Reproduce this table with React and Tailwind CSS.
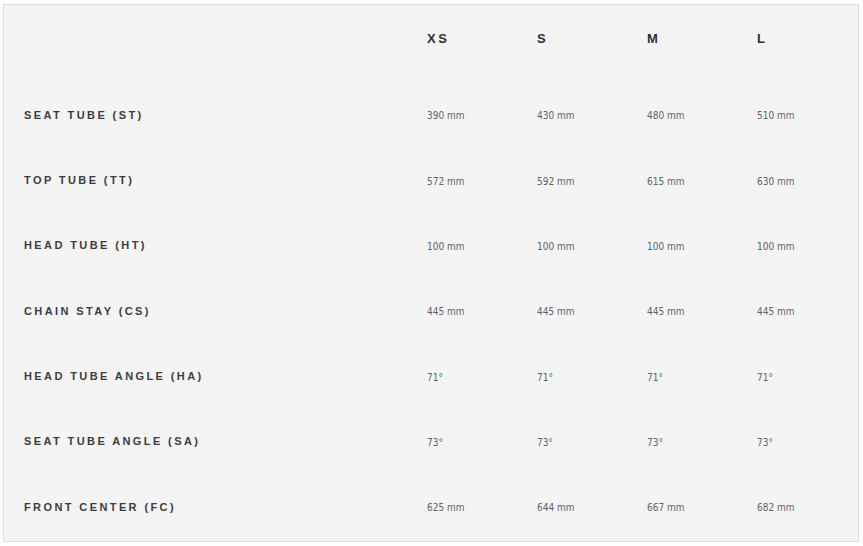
import React from "react";

const sizes = ["XS", "S", "M", "L"];
const rows = [
  ["SEAT TUBE (ST)", ["390 mm", "430 mm", "480 mm", "510 mm"]],
  ["TOP TUBE (TT)", ["572 mm", "592 mm", "615 mm", "630 mm"]],
  ["HEAD TUBE (HT)", ["100 mm", "100 mm", "100 mm", "100 mm"]],
  ["CHAIN STAY (CS)", ["445 mm", "445 mm", "445 mm", "445 mm"]],
  ["HEAD TUBE ANGLE (HA)", ["71°", "71°", "71°", "71°"]],
  ["SEAT TUBE ANGLE (SA)", ["73°", "73°", "73°", "73°"]],
  ["FRONT CENTER (FC)", ["625 mm", "644 mm", "667 mm", "682 mm"]],
];

export default function App() {
  return (
    <div className="w-[863px] h-[546px] bg-white pl-[3px] pt-[4px]">
      <div className="w-[856px] h-[538px] border border-[#dcdcdc] bg-[#f4f4f4] pl-5">
        <div className="grid grid-cols-[403px_110px_110px_110px_1fr] h-[66px] items-center pt-[2px]">
          <div />
          {sizes.map((s) => (
            <div
              key={s}
              className="font-['Liberation_Sans',sans-serif] font-bold text-[13px] tracking-[2.5px] text-[#2e2e2e]"
            >
              {s}
            </div>
          ))}
        </div>
        <div className="mt-[11.33px]">
          {rows.map(([label, vals]) => (
            <div
              key={label}
              className="grid grid-cols-[403px_110px_110px_110px_1fr] h-[65.33px] items-center"
            >
              <div className="font-['Liberation_Sans',sans-serif] font-bold text-[11px] tracking-[2.4px] text-[#3c3c3c]">
                {label}
              </div>
              {vals.map((v, i) => (
                <div
                  key={i}
                  className="pt-[2px] font-['DejaVu_Sans_Condensed','DejaVu_Sans',sans-serif] text-[10px] text-[#626262]"
                >
                  {v}
                </div>
              ))}
            </div>
          ))}
        </div>
      </div>
    </div>
  );
}
